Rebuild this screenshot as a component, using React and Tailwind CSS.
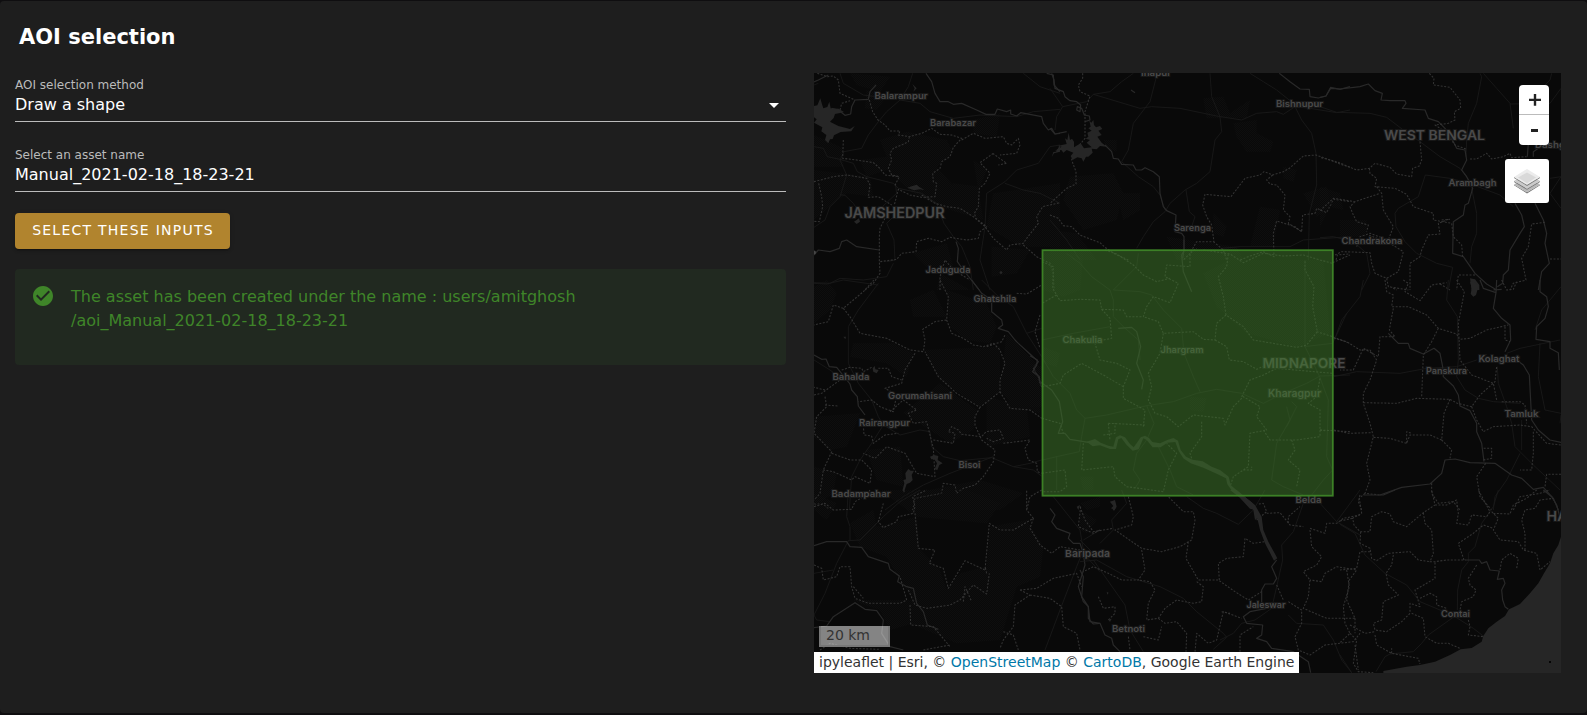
import React from "react";

/* Map sheets: every sheet is drawn at three times the map scale from its own origin. */
const sheets = [
  {
    at: [740, 60],
    forest: [
      "M330 40L450 50L420 95L350 75Z", "M380 90L440 110L410 150L375 145Z", "M222 225L310 265L310 320L222 320Z", "M420 240L500 215L620 240L640 280L590 320L660 400L600 440L520 400L440 330L380 350L360 300L440 290Z",
      "M640 370L720 380L740 330L700 300L730 480L600 440Z", "M700 180L780 160L770 230L700 220Z", "M760 400L960 370L960 560L840 560L740 500Z", "M755 560L870 570L830 640L755 650Z", "M600 640L690 690L590 690Z", "M222 330L390 350L400 410L320 400L222 480Z", "M520 580L620 550L640 620L560 620Z",
    ],
    roads: [
      "M518 40L505 80L480 120L440 155L415 185L385 225L365 265L312 275L300 300L320 345L300 410L270 440L255 480L222 502", "M222 260L250 265L262 290L300 298L340 310L352 335L380 350L460 370L475 385L545 400L590 430L612 490L640 530L665 560L690 620L700 690", "M222 75L235 70", "M300 404L315 406L340 430L360 460L400 465L470 400L466 370",
      "M465 465L440 490L462 540L465 600L440 605", "M850 40L900 80L960 100", "M480 120L540 130L570 155L640 175L720 165L830 170L880 155L960 148", "M960 255L930 260L895 310L830 330L795 365L740 400L735 500L720 600L750 690", "M795 370L850 390L900 400L960 430", "M300 40L310 70L370 105L408 110", "M222 668L270 670L300 655L370 660L440 650L460 610",
    ],
    rivers: ["M408 75L390 95L385 118L345 120L335 140L332 162L315 166L298 152L275 145", "M558 40L575 65L585 100L600 125L625 125L640 133L665 130L710 150L738 163L765 163L772 147L800 155L812 150L812 162L830 168L842 158L905 170L910 190L925 210L935 205L945 222L960 220", "M920 40L940 45L942 75L960 95", "M222 585L235 570L270 575L298 565L305 545L320 540L350 560L418 570", "M648 545L655 565L652 605L670 630L718 690", "M222 66L235 60L265 45"],
    borders: [
      "M232 40L262 50L280 48L295 60L300 100L345 120", "M300 150L305 130L330 122", "M388 120L398 155L414 180L435 195L450 213L480 213L475 225L508 230L545 220L575 205L600 223L635 225L665 235L640 262L630 290L605 305L600 325L578 340L580 365L590 370L585 410L545 412L510 405L475 388L463 435",
      "M508 230L505 245L485 255L460 265L450 280L455 300L445 325L455 345L478 350L463 380", "M665 240L700 220L735 235L790 230L800 250L815 255L835 235L840 255L830 280L780 285M760 280L720 308L750 340L735 370L718 385L715 440L703 460L708 475L740 500L720 515L715 535L680 540L630 532L605 545L565 535L530 545L528 575L485 580L470 598L420 605", "M758 280L800 310L775 315", "M310 240L308 295L350 300L400 308L420 325L435 345L475 350",
      "M222 365L280 350L320 345L380 355L390 375L385 412L415 410L455 435", "M236 370L245 410L248 440L238 485L222 484", "M435 475L420 505L418 530L418 605L420 640L400 670L375 690", "M545 405L585 430L620 440L660 445L700 470L735 500L760 535L800 570L810 555L850 550L860 535L895 490L890 470L908 440L960 428", "M850 555L890 590L930 610L940 640L942 690", "M600 690L600 650L615 600L640 630L690 660",
    ],
    water: ["M222 138L232 136L241 115L246 133L250 145L262 141L268 125L272 145L296 146L312 156L304 158L285 162L281 174L270 185L295 198L330 207L344 198L334 214L302 216L282 226L278 237L270 238L265 250L255 240L259 225L244 214L247 202L222 188L230 178L222 172Z", "M502 383L515 379L530 374L538 381L553 390L540 388L522 391Z", "M517 72L530 85L520 95L524 85Z", "M342 485L357 475L360 485L350 492Z", "M778 638L783 632L788 638L783 643Z", "M935 292L940 276L948 275L960 255L960 275L942 280Z"],
  },
  {
    at: [1050, 60],
    forest: ["M60 350L190 340L220 400L200 480L100 510L40 420Z", "M200 400L270 400L270 450L220 480Z", "M460 115L520 110L540 160L600 120L590 175L470 175Z", "M550 190L620 180L620 220L670 245L660 275L590 275L560 230Z", "M0 510L80 520L140 600L0 600Z", "M630 440L690 450L670 560L600 560L620 480Z", "M490 460L530 500L520 530L490 520Z", "M700 320L740 330L730 365L700 355Z", "M760 400L830 380L840 440L800 470Z", "M160 240L200 240L200 275L170 265Z", "M350 530L560 560L580 600L380 600Z"],
    roads: ["M0 85L38 140L20 170L15 210M38 140L110 125L130 103L270 145L305 140L390 145L500 168L575 180L620 160L680 155L700 163L735 140", "M130 103L180 95L215 65L250 40", "M318 55L300 125L250 190L235 270L215 305L265 350L310 380L330 405L345 450", "M480 40L485 110L510 170L515 215L495 240L480 335L440 370L405 390L360 430L345 455L310 485L280 530L260 565", "M600 40L640 65L680 90L730 130L755 180L785 220L798 280L800 375L778 460L775 600", "M735 140L780 145L860 158L900 150", "M408 390L418 455L435 470L425 500", "M515 565L570 560L720 560L760 540L900 530", "M0 480L50 540L90 600"],
    rivers: ["M0 205L15 222L50 215", "M5 40L12 60L15 85L40 95L45 110L60 122L80 125L92 135L90 155L80 150L82 140L95 145L103 165L118 168L120 180L105 185", "M165 255L185 275L190 295L205 297L215 313L250 315L258 330L275 330L285 323L310 335L328 350L330 400L340 440L350 452L378 465L375 515L395 520L402 530L402 570L398 595", "M688 40L720 65L750 87L778 88L780 110L805 114L828 108L842 82L870 88L900 80", "M243 90L255 98"],
    borders: ["M98 40L98 55L85 75L90 95L120 108L105 155L105 235L80 265L65 300L78 335L78 372L50 385L0 430", "M0 465L25 475L40 497L65 500L90 525L150 548L165 562L195 582L235 600", "M900 322L870 312L840 300L798 285L760 288L718 325L700 335L668 345L642 335L630 345L585 355L543 410L465 403L458 435L470 470L485 495L492 545L440 545L420 580L400 600", "M668 345L650 360L660 372L680 375L705 405L700 450L720 470L715 490L755 515L758 465L795 460L800 445L830 458L850 418L900 425", "M755 515L735 500L680 483L670 520L672 590L640 575L595 590L570 600", "M490 545L520 570L530 600", "M895 582L862 585L858 600"],
    water: ["M15 272L35 260L22 258L50 252L45 235L52 240L56 218L60 240L66 236L72 245L72 262L92 250L102 265L125 262L110 248L120 240L107 236L115 230L112 218L125 212L115 205L122 200L118 182L124 188L130 180L132 195L138 202L150 198L157 207L145 212L155 225L142 230L155 248L170 260L150 258L140 268L125 266L128 278L115 290L108 290L100 305L95 295L82 292L68 300L62 288L70 278L50 270L40 278L34 270Z"],
  },
  {
    at: [1320, 60],
    forest: ["M0 380L60 400L70 450L30 440L0 500Z", "M60 480L140 480L140 530L60 530Z"],
    roads: ["M0 140L50 157L150 160L200 172L250 210L300 245L360 290L420 325L455 370", "M480 40L485 50L470 130L445 190L440 240L438 290", "M455 385L470 460L470 520L455 560L450 610", "M490 40L530 85L570 130L580 205", "M570 132L690 130L723 85", "M450 370L390 355L316 345L295 410L235 445L225 460L228 500L255 545L290 580L350 610L398 622L385 690", "M0 533L40 530L100 545L140 580L150 640L125 690", "M460 375L540 405L580 440", "M695 40L690 60L660 90", "M690 355L723 350L690 400L723 445"],
    rivers: ["M0 112L18 108L32 85L60 87L120 80L145 72L165 92L187 100L183 120L210 122L255 122L258 130L247 145L315 150L325 175L355 185L375 205L395 235L410 265L435 270L440 300L425 330L440 350L458 385L445 430L435 435L430 465L400 485L398 580L430 590L465 640L500 672L530 690", "M585 430L605 465L613 500L600 520L570 570L565 630L550 645L548 670L532 680", "M645 430L670 480L680 520L675 550L688 610L665 635L655 690", "M625 250L622 290M640 290L640 275L655 265", "M520 690L545 688"],
    borders: ["M328 40L342 55L340 75L390 82L420 120L422 145L403 155L405 180L385 190L345 195L375 215L405 255L440 268", "M300 245L305 300L298 318L278 325L275 350L230 342L210 322L165 310L148 325L110 330L50 305L0 292", "M148 325L150 340L170 355L165 380L225 385L260 403L280 440L340 460L340 480L395 490L400 530L425 555L428 590", "M170 380L185 400L190 450L220 500L205 540L150 520L120 530L110 560", "M0 452L40 415L105 425L180 400", "M105 425L90 440L100 465L110 485L145 495L140 515", "M45 585L65 575L150 578L155 610L165 640L200 655L235 635L250 575L210 550L145 525", "M200 655L205 680L265 690M210 680L230 690", "M385 478L355 490L360 522L325 525L305 570L300 590L270 610L270 690", "M450 297L470 297L500 280L515 297L550 290L570 280L575 293L620 290", "M675 487L635 492L625 560L605 595L618 660L580 670L570 690", "M690 597L723 597", "M465 645L415 645L410 690M360 672L390 690M365 480L390 478"],
    water: ["M450 655L465 658L478 675L478 690L455 690Z"],
  },
  {
    at: [800, 280],
    forest: ["M42 20L80 0L110 40L90 90L42 130Z", "M160 190L280 190L340 220L320 290L260 250L150 230Z", "M330 60L400 30L440 110L340 110Z", "M440 30L560 70L590 140L570 190L500 180L450 140Z", "M620 160L720 260L720 400L640 380L600 330Z", "M370 210L600 200L600 330L540 380L420 300Z", "M310 400L420 310L530 390L520 450L450 490L390 450Z", "M42 410L180 400L140 500L90 510L42 470Z", "M560 350L680 380L690 470L560 500Z", "M200 510L300 500L310 620L230 600Z", "M340 640L540 600L670 640L600 690L340 690Z", "M42 560L110 580L100 640L42 680Z"],
    roads: ["M235 10L205 50L175 90L145 140L145 250L175 310L215 360L235 410L250 435L215 490L180 540L155 590L148 690", "M250 435L300 465L360 450L390 455L395 500L430 530L480 542L575 533L640 560L690 550L725 540", "M255 690L310 650L370 615L450 580L580 530", "M545 0L590 45L640 80L680 160L725 230", "M42 240L90 270L130 300", "M640 560L700 570L725 588", "M42 10L80 12L130 0L235 15", "M680 160L725 145"],
    rivers: ["M42 225L65 238L78 237L88 260L110 262L150 312L155 330L172 350L175 378L195 405", "M515 0L545 40L575 60L575 95L605 120L608 135L595 145L625 155L645 180L655 190L690 222L715 245L700 265L715 290L720 310L725 320"],
    borders: ["M222 0L190 35L130 85L100 75L85 125L42 135", "M130 85L150 110L180 160L260 175L290 190L330 210L370 215L375 180L368 148L405 125L440 120L445 50L420 0", "M440 120L455 160L490 175L520 195L550 200L580 190L600 210L615 250L600 300L600 335L540 382L470 340L415 290L375 215", "M345 220L315 270L305 310L255 325L290 345L280 395L240 380L215 360L175 365", "M600 335L630 385L690 390L725 415", "M540 382L525 410L525 435L545 480L585 510L580 545L550 590L525 615L490 625L470 640L465 615L430 610L425 640L345 655L338 690", "M270 395L310 360L350 390L325 400L340 430L380 425L400 505L405 590L350 580L315 520L260 500L225 535L190 520", "M75 330L42 322M42 345L65 340L120 300M75 350L80 380L50 410L42 460L95 515L70 570L60 640L42 660", "M75 375L115 378", "M95 520L150 540L185 540L215 570L210 610L165 590L155 600L100 575L70 570", "M190 435L192 465L215 468L220 490L255 465L295 460", "M400 480L460 490L465 460L445 455L455 440L475 450L485 463L545 470L558 455L600 450L610 475L580 485L560 475", "M610 490L690 480L675 505L685 540L710 550L712 575L725 580", "M720 105L705 155L720 205M650 40L680 42L725 15", "M725 630L690 650L680 690", "M560 200L605 185L615 165", "M42 672L70 672L85 685", "M235 265L265 265L275 290L305 300", "M125 270L150 262L185 265L190 275L215 262"],
    water: ["M218 265L224 258L226 268L236 270L230 280L220 275Z", "M390 530L402 525L415 528L413 540L428 550L418 555L412 570L404 568L411 550L403 538L394 538Z", "M325 567L332 572L342 572L335 585L338 600L330 608L320 612L312 636L307 632L313 610L310 600L318 598L316 580Z", "M130 170L138 170L136 178Z"],
  },
  {
    at: [1030, 240],
    forest: ["M40 40L160 40L150 150L100 170L40 150Z", "M520 100L600 60L880 60L900 280L800 320L650 280L560 200Z", "M40 320L90 340L80 380L40 370Z", "M480 470L530 475L520 515L480 510Z", "M150 710L190 710L190 750L160 750Z", "M0 370L36 380L36 500L0 500Z"],
    roads: ["M110 40L150 70L185 110L240 150L250 180L250 230L280 260L325 300L330 360", "M325 40L320 80L250 150L330 155L365 165L400 210L455 265L462 340L490 410L510 455", "M38 355L70 410L120 460L140 510L165 535L230 525L350 497L430 485L500 460L560 448L635 460L700 490L760 460L830 430L870 408L960 405", "M165 535L155 590L148 635L80 650L38 660", "M350 497L372 550L350 600L320 640L310 690L330 720L315 745", "M825 60L825 320L850 370L868 408L895 480L890 650L908 690", "M80 648L80 750M770 500L780 540L740 610L725 720L760 740L820 765", "M36 300L130 280L240 260M908 690L880 720L845 765", "M380 610L420 690L440 740L490 765M822 320L908 310L950 220", "M785 485L800 500L770 560"],
    rivers: ["M462 0L462 32L455 45L460 95L485 155", "M265 265L305 262L320 275L332 320L320 370L340 420L335 448", "M0 347L22 360L20 375L8 395L28 410L30 425L65 450L88 485L98 545L85 580L105 580L120 598L180 608"],
    borders: ["M36 65L70 80L68 145L80 165L36 190M80 165L90 182L150 178L210 180L215 208L280 210L290 230L340 230L350 200L370 170L420 188L445 130L405 110L410 75L480 80L480 40L500 25", "M225 30L260 42L310 75L340 105L380 125L420 115", "M520 30L600 42L640 68L700 40L760 48L820 45L870 60L908 70", "M595 42L590 80L565 110L580 170L588 225L640 260L670 300L800 322L830 315L862 275L848 200L852 140L825 90L825 60", "M588 225L560 250L555 300L520 298L490 275L400 280L385 245L340 230", "M555 300L590 320L598 360L640 365L680 388L720 370", "M400 280L390 340L355 400L365 440L355 480L375 520L410 530L445 560L490 525L580 535L585 555L610 500L640 470L690 500L680 530L710 570L660 580L655 680L610 710L600 740", "M340 560L345 510L280 475L280 440L300 390L260 370L210 360L195 310M280 440L220 405L155 370L100 405L90 430L40 440", "M36 535L90 550L100 580M160 610L155 690L250 680L255 710L290 740L400 755L415 690L440 640L410 610", "M36 700L105 690L110 740L90 755L40 755", "M215 208L240 235L245 295L220 300", "M235 550L345 555M235 550L240 600M220 585L255 580L255 550", "M515 545L515 590L480 640L485 655", "M635 470L660 420L700 405L740 385L908 400M870 415L860 470L835 490L870 510L870 590L800 600L720 600L700 570", "M785 600L795 630L775 660L810 690L800 740", "M870 570L960 575M860 275L908 290L960 310", "M640 690L665 690L665 680M908 68L960 45"],
    water: ["M170 605L195 597L212 608L235 617L250 620L258 592L270 586L285 592L300 612L311 622L322 607L332 592L345 587L357 594L367 606L390 610L412 600L430 594L444 602L452 630L468 650L488 659L518 664L545 680L570 690L596 710L602 735L625 755L650 775L668 790L676 810L660 806L628 772L607 754L592 733L588 715L555 699L520 683L482 670L460 655L446 633L436 606L412 608L392 622L368 622L350 600L340 595L326 628L308 632L290 615L274 594L265 598L258 627L240 627L210 616L188 619Z", "M140 800L150 795L145 810ZM240 785L250 785L258 800L254 810L243 805L250 798Z"],
  },
  {
    at: [1320, 280],
    forest: [],
    roads: ["M130 0L120 50L65 120L45 175", "M42 290L110 275L240 280L320 265L410 260L470 240", "M385 0L380 60L412 110L415 240L410 290L435 330L475 355L520 365L600 370", "M560 220L600 205L720 180", "M532 260L535 310L560 380L575 430L585 500L640 555L720 630", "M600 520L560 600L525 650L520 690", "M605 420L605 510", "M660 190L655 290L675 390L723 400M723 20L665 90L645 150", "M723 405L720 430"],
    rivers: ["M480 0L490 25L528 38L520 85L545 115L570 135L572 180L555 215M530 0L528 40", "M660 0L660 35L680 50L685 80L675 115L650 140L648 178L690 185L690 205L715 218L718 270", "M205 160L235 190L265 190L270 205L310 222L342 205L360 220L368 260L370 290L400 318L415 345L420 378L450 392L470 430L470 455L485 490L492 545", "M590 240L610 255L628 285L635 420L655 450L690 480L723 487", "M180 645L245 622L330 612L365 580L375 540L405 537L450 548L525 550L575 585L605 595L640 628L670 622L700 655L715 690"],
    borders: ["M195 0L200 35L220 45L215 80L265 80L320 105L355 145L410 162L418 178L450 175L500 150L565 135", "M250 0L265 10L255 35L300 62L335 15L380 8", "M410 0L433 35L415 130L420 240L455 285L520 310L530 360", "M220 85L208 150L225 170L180 170L175 230L130 205L100 270L60 270", "M42 175L80 185L120 210L150 210L170 240L150 300L130 340L130 370L150 430L160 470L140 550L150 600L135 640L180 645", "M130 368L230 370L290 355L390 358L412 370L455 380L480 345L525 305L530 260", "M355 145L335 185L310 225L305 350", "M390 358L372 400L365 480L395 510L390 535M365 480L330 465L270 465L260 490L210 475L160 472M260 490L260 455L275 460", "M42 450L85 460L155 458", "M455 380L470 420L490 455L520 440L600 435L635 440L680 490L723 495", "M490 540L515 535L515 505L490 505M640 455L640 520L635 570L600 570M497 550L470 590L480 650L515 690", "M120 645L115 665L125 690M335 610L335 640L355 670L400 665L420 690", "M723 583L680 583L675 620M580 690L600 650L660 640L690 630", "M545 365L600 365L615 375L620 430M555 140L555 180L570 185M0 450L15 452", "M545 0L560 30L580 28L590 5"],
    water: ["M450 5L460 5L475 15L473 28L468 45L460 50L452 42L455 25Z"],
  },
  {
    at: [800, 490],
    forest: ["M150 100L220 60L230 110L350 80L360 180L420 240L440 300L480 250L560 230L570 110L680 90L730 170L720 260L650 290L600 450L470 460L330 400L340 330L300 270L260 200L180 170Z", "M160 330L340 330L340 400L270 420L240 360L180 340Z", "M42 10L110 40L80 90L42 60Z", "M240 0L500 0L600 40L560 100L350 80Z", "M840 60L890 90L860 130L840 120Z"],
    roads: ["M360 0L300 35L250 80L180 150L145 152L110 220L75 310L42 375L50 390L90 395", "M145 0L140 80L150 110L150 150", "M42 250L100 240M760 20L840 120L850 180L830 230L780 360L735 480", "M850 190L900 245M850 150L900 120"],
    rivers: ["M42 167L80 155L140 155L150 170L185 172L205 200L265 220L270 238L298 258L293 275L320 290L340 295L350 340L370 365L382 405L415 418", "M42 413L80 408L100 380L165 338L195 358L230 362L250 390L245 430L270 470L310 480", "M750 55L765 75L755 95L770 115L810 130L805 145L820 160L840 160L850 190L855 225L835 290L850 335L865 350L865 385L880 402L900 400"],
    borders: ["M42 50L75 40L100 60L155 58L165 35L200 15L210 0M250 40L235 95L250 113L290 95L295 80L340 70L345 50L338 20L380 0", "M345 70L355 175L405 180L388 220L430 235L445 295L495 212L555 240L568 100L600 120L640 120L700 85L680 60L680 0", "M42 225L65 235L70 270L110 260L120 230L150 230L155 290L165 325L205 340L300 340L320 330L300 260", "M160 290L190 325M325 300L345 345L380 355L450 345L480 330L520 285L560 312L568 250", "M330 345L332 405L400 410L450 470M490 335L495 290L515 335", "M700 85L690 115L720 165L755 190L780 170L840 180M560 250L555 230", "M660 300L710 295L760 265L830 250L845 290M660 300L690 315L645 345L640 410L610 450L600 475", "M690 315L750 325L785 350L790 410L830 430L840 480M610 425L640 435L655 480", "M842 50L835 110L880 130L900 120M370 480L450 465M60 480L90 460L150 475L240 478"],
    water: ["M310 0L316 2L311 8Z"],
  },
  {
    at: [1080, 490],
    forest: ["M0 40L60 20L60 50L20 60Z"],
    roads: ["M320 20L370 55L410 70L475 103L520 60L555 0", "M0 215L50 210L140 260L240 290L310 325L350 365L430 430L440 442L400 478", "M40 210L135 345L150 420L190 485", "M670 40L640 125L605 165L608 210L590 290L575 355L525 390L485 400L460 430L420 450", "M720 40L770 95L840 135M840 0L770 95", "M625 375L650 400L730 405L760 450L785 510L815 548", "M60 160L100 120L95 90L140 40L125 0M0 150L40 190"],
    rivers: ["M0 240L10 260L5 320L25 350L30 395L60 400L75 435L95 445L100 465L120 485", "M590 210L575 230L590 265L580 282L555 282L545 300L545 340L560 355L510 365L490 380L500 400L548 405L545 435L530 445L560 455L575 475L640 485L685 515L692 548"],
    borders: ["M145 20L160 80L155 105L105 120L185 175L245 185L300 170L335 150L345 90L340 65L310 65L265 20", "M185 180L195 240L175 270L125 270L85 250L40 230L10 245", "M325 155L318 205L355 270L415 270L465 305L505 330L545 305M418 270L415 220L440 205L490 200L495 145L520 160L555 155", "M350 275L370 290L365 335L340 340L290 330L255 355L235 385L200 390L205 340L225 300L210 275L175 270", "M235 385L255 400L290 395L320 430L318 485M190 440L235 450L245 410M345 485L350 430L385 460L410 450L425 385L430 365L485 385", "M560 70L600 68L630 105L670 110M530 90L560 65L550 40L535 42M690 115L735 130L740 100L770 100L790 85L840 75", "M690 120L695 170L725 200L710 225L670 245L690 270L685 320L670 355L740 385L825 385L800 330L808 270L830 240L770 230L735 250L725 275L690 270", "M625 335L665 360L665 400L645 440L655 480L690 495L735 465L820 455L840 430M825 385L825 430M825 465L835 540", "M480 485L480 435L520 410M425 365L450 370M55 320L70 355L105 350L105 370L85 390M0 50L15 90L40 125L100 115M145 440L150 480", "M590 285L610 330M625 100L625 80L660 50"],
    water: ["M450 0L470 0L500 25L525 45L545 80L550 120L565 155L592 205L582 212L555 160L540 120L532 85L525 90L520 60L490 30Z", "M90 35L105 30L110 50L102 63L98 58L104 48Z", "M80 305L86 308L82 314ZM84 388L95 386L90 396Z"],
  },
  {
    at: [1340, 490],
    forest: [],
    roads: ["M0 103L45 130L75 195L135 250L200 285L240 335L300 360L345 378L265 435L245 460L220 485L150 492L135 500L108 545", "M475 0L460 50L425 100L405 170L385 190L385 215L365 240L353 300L352 360", "M345 380L400 415L435 442M0 495L35 548"],
    rivers: ["M70 15L130 15L165 0", "M380 210L418 210L425 220L440 215L450 240L478 243L472 268L490 265L495 280L485 300L488 330L495 350L505 358", "M610 0L635 20L650 45L658 75L662 85"],
    borders: ["M75 10L58 25L65 70L38 85L42 105L60 125L90 125L95 80L125 65L150 72L160 95L200 110L250 68L285 45L275 0M285 45L320 45L350 30L355 70L350 100L385 105L395 75L440 80L450 65L415 0", "M250 68L255 100L275 120L280 190L270 215L285 215L320 210L380 210", "M0 93L38 85M62 125L60 160L90 175L95 205L110 212L145 190L210 185L235 210L270 215M90 185L60 185L50 235L0 240M20 240L28 290L10 350L15 400L30 430L0 458", "M160 195L155 225L138 250L145 285L175 315L130 335L125 390L100 400L105 420L140 425L185 395L210 370L210 340L240 350L225 300L285 265L285 215", "M30 430L50 450L40 520L55 545L100 548M30 405L75 430L105 425M105 435L110 465L155 490L235 505L240 522M155 490L155 475M215 370L250 385L255 440L290 460L325 460L360 475", "M240 325L270 310L290 320L290 345L320 355M455 65L475 85L460 120L480 150L535 155L550 180L590 190L600 240L630 215M555 180L555 130L545 90L555 60L585 55L600 30L640 25", "M460 70L510 72L520 45L560 25L590 0M372 210L355 160L400 130L430 105L460 115M480 240L485 210L510 190L535 205L530 235", "M410 225L385 265L390 285L408 300L400 320L365 335L360 360M385 390L390 410L385 435L430 440"],
    water: ["M663 140L655 165L640 190L630 220L612 250L595 280L570 310L540 342L520 352L507 358L495 378L470 395L445 415L430 438L425 455L395 474L362 478L330 495L285 515L240 525L200 530L130 543L130 549L663 549Z"],
  },
];

const places = [
  ["Inapur", 1156, 75.5, 30, 9], ["Balarampur", 901, 99, 53, 9], ["Barabazar", 953, 126, 46, 9], ["Bishnupur", 1299.5, 107, 47, 9],
  ["WEST BENGAL", 1434.5, 140, 101, 12.5], ["JAMSHEDPUR", 894.5, 217.5, 100, 14], ["Arambagh", 1472.5, 186, 48, 9], ["Dashg", 1550, 147.5, 30, 9],
  ["Sarenga", 1192.5, 231, 37, 9], ["Chandrakona", 1372, 244, 61, 9], ["Jaduguda", 948, 273, 45, 9], ["Ghatshila", 995, 301.5, 43, 9],
  ["Chakulia", 1082.5, 342.5, 40, 9], ["Jhargram", 1182, 353, 43, 9], ["MIDNAPORE", 1304, 367.5, 83, 13], ["Kharagpur", 1294.5, 396.5, 53, 10],
  ["Bahalda", 851, 379.5, 37, 9], ["Gorumahisani", 920, 399, 64, 9], ["Rairangpur", 884.5, 426, 51, 9], ["Bisoi", 969.5, 468, 22, 9],
  ["Badampahar", 861, 496.5, 59, 9], ["Kolaghat", 1499, 362, 41, 9], ["Panskura", 1446.5, 374, 41, 9], ["Tamluk", 1521.5, 417, 34, 9],
  ["Belda", 1308.5, 503, 26, 9], ["Baripada", 1087.5, 557, 45, 9.5], ["Jaleswar", 1266, 608, 39, 9], ["Betnoti", 1128.5, 632, 33, 9],
  ["Contai", 1455.5, 617, 29, 9], ["HA", 1557, 521.2, 21, 13.5],
];

function BaseMap() {
  return (
    <svg className="block h-[600px] w-[747px]" viewBox="814 73 747 600">
      <defs>
        <pattern id="trees" width="6" height="6" patternUnits="userSpaceOnUse">
          <rect width="2.2" height="2.2" fill="#121212" />
          <rect x="3" y="3" width="2.2" height="2.2" fill="#121212" />
        </pattern>
      </defs>
      <rect x="814" y="73" width="747" height="600" fill="#090909" />
      {sheets.map(({ at, forest, roads, rivers, borders, water }) => (
        <g key={at.join()} transform={`translate(${at[0]} ${at[1]}) scale(${1 / 3})`} fill="none" strokeLinejoin="round">
          <path d={forest.join("")} fill="url(#trees)" />
          <path d={roads.join("")} stroke="#191919" strokeWidth="2.6" />
          <path d={rivers.join("")} stroke="#292929" strokeWidth="3.6" />
          <path d={borders.join("")} stroke="#333" strokeWidth="3.2" strokeDasharray="6 4.5" />
          <path d={water.join("")} fill="#262626" />
        </g>
      ))}
      <rect x="1549" y="661" width="2" height="2" fill="#050505" />
      <g fontWeight="600" textAnchor="middle" className="font-['Inter','Open_Sans',sans-serif]">
        {places.map(([name, x, y, width, size]) => (
          <text key={name} x={x} y={y} fontSize={size} textLength={width} lengthAdjust="spacingAndGlyphs" fill="#4a4a4a" stroke="#171717" strokeWidth="2" paintOrder="stroke">
            {name}
          </text>
        ))}
      </g>
      <circle cx="814" cy="252.5" r="2" fill="#474747" />
      <rect x="1042.5" y="250.2" width="290.3" height="245.5" fill="#417d2b" fillOpacity="0.5" stroke="#3e8427" strokeOpacity="0.95" strokeWidth="1.8" />
    </svg>
  );
}

function LayersIcon() {
  return (
    <svg className="size-[26px]" viewBox="0 0 26 26">
      <path d="M0 16.5L13 24.3L26 16.5V17.3L13 25.4L0 17.3Z" fill="#747474" />
      <path d="M0 16.5L13 8.5L26 16.5L13 24.3Z" fill="#b9b9b9" />
      <path d="M0 12.9L13 20.7L26 12.9V13.9L13 21.8L0 13.9Z" fill="#777" />
      <path d="M0 12.9L13 4.9L26 12.9L13 20.7Z" fill="#cbcbcb" />
      <path d="M0 9L13 16.8L26 9V10L13 17.9L0 10Z" fill="#7d7d7d" />
      <path d="M0 9L13 1L26 9L13 16.8Z" fill="#ececec" />
      <path d="M4 9.500L13 4.500L22 9.500L13 15.500Z" fill="#d9d9d9" />
    </svg>
  );
}

function Field({ label, value, select }) {
  return (
    <div className="h-[49px] border-b border-[#bcbcbc]">
      <div className="flex h-5 items-center pt-1 text-xs leading-5 text-[#bbb]">{label}</div>
      <div className="flex h-6 items-center justify-between text-base leading-6 text-white">
        <span>{value}</span>
        {select && (
          <svg className="-mt-px size-6" viewBox="0 0 24 24" fill="white"><path d="M7 10l5 5 5-5z" /></svg>
        )}
      </div>
    </div>
  );
}

export default function App() {
  return (
    <div className="h-[715px] overflow-hidden bg-[#0f0e10] pt-px font-['DejaVu_Sans',sans-serif]">
      <div className="h-[712px] rounded bg-[#1e1e1e] pt-5">
        <h1 className="h-[51px] pl-[19px] text-[21px] leading-8 font-bold text-white">AOI selection</h1>
        <div className="flex">
          <div className="mt-px ml-[15px] w-[771px] shrink-0">
            <Field label="AOI selection method" value="Draw a shape" select />
            <div className="h-[21px]" />
            <Field label="Select an asset name" value="Manual_2021-02-18_18-23-21" />
            <button className="mt-[21px] block h-9 w-[215px] rounded bg-[#b1842e] pb-0.5 pl-px text-sm leading-5 tracking-[1.25px] whitespace-nowrap text-white shadow-[0_3px_1px_-2px_rgba(0,0,0,.2),0_2px_2px_rgba(0,0,0,.14),0_1px_5px_rgba(0,0,0,.12)]">
              SELECT THESE INPUTS
            </button>
            <div className="mt-5 flex h-24 gap-4 rounded bg-[#212920] p-4 pt-[15px] text-base leading-6 text-[#3f8529]">
              <svg className="size-6 shrink-0" viewBox="0 0 24 24" fill="currentColor">
                <path d="M12 2C6.5 2 2 6.5 2 12s4.500 10 10 10 10-4.500 10-10S17.500 2 12 2m-2 15l-5-5 1.410-1.410L10 14.170l7.590-7.590L19 8z" />
              </svg>
              <p className="pt-px">The asset has been created under the name : users/amitghosh<br />/aoi_Manual_2021-02-18_18-23-21</p>
            </div>
          </div>
          <div className="relative mt-px ml-7 h-[600px] w-[747px] shrink-0 overflow-hidden">
            <BaseMap />
            <div className="absolute top-3 right-3 flex flex-col items-end gap-[14px]">
              <div className="w-[30px] overflow-hidden rounded-sm bg-white">
                <div className="flex h-[30px] items-center justify-center border-b border-[#bbb]">
                  <svg className="mt-px ml-px size-3" viewBox="0 0 12 12"><path d="M4.800 0h2.400v4.700H12v2.400H7.200v4.700H4.800V7.100H0V4.700h4.800z" fill="#222" /></svg>
                </div>
                <div className="flex h-[30px] items-center justify-center">
                  <div className="mt-px ml-px h-[3px] w-[7px] bg-[#222]" />
                </div>
              </div>
              <div className="flex size-11 items-center justify-center rounded-[3px] bg-white"><LayersIcon /></div>
            </div>
            <div className="absolute bottom-[26px] left-[5px] h-[21px] w-[71px] border-2 border-t-0 border-[#777] bg-white/50 pl-[5px] text-[14px] leading-[19px] text-[#333]">20 km</div>
            <div className="absolute bottom-0 left-0 h-[21px] w-[485px] bg-white pl-[5px] text-[14px] leading-[21px] whitespace-nowrap text-[#333]">
              ipyleaflet | Esri, © <span className="text-[#0078a8]">OpenStreetMap</span> © <span className="text-[#0078a8]">CartoDB</span>, Google Earth Engine
            </div>
          </div>
        </div>
      </div>
    </div>
  );
}
